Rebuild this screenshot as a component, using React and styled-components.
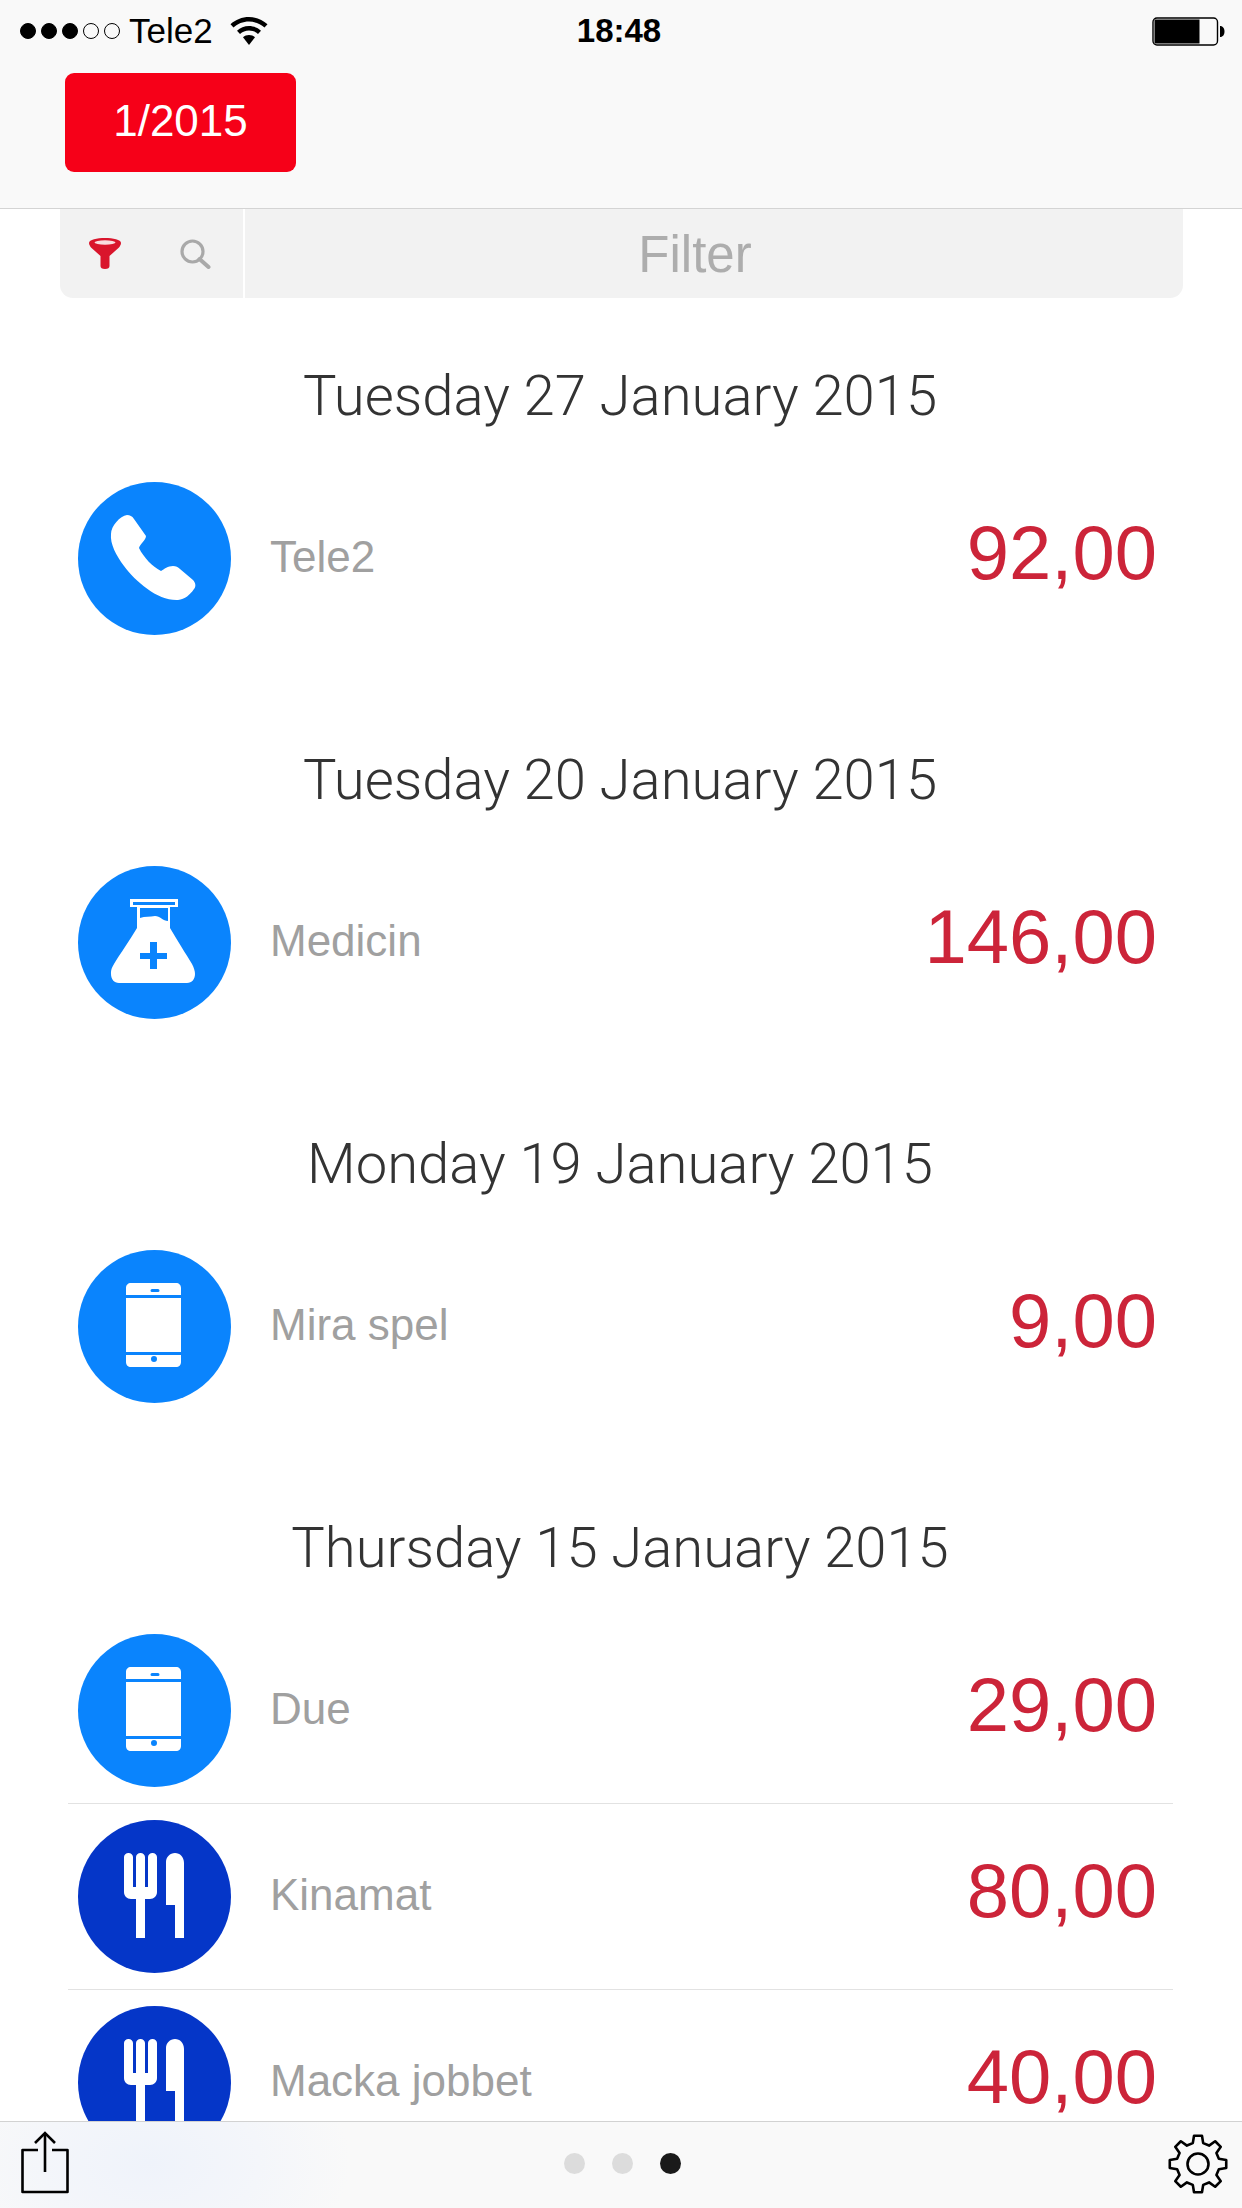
import React from "react";
import styled, { createGlobalStyle } from "styled-components";

const Global = createGlobalStyle`
  html, body { margin: 0; padding: 0; background: #fff; }
  * { box-sizing: border-box; }
`;

const Screen = styled.div`
  width: 1242px;
  height: 2208px;
  display: flex;
  flex-direction: column;
  overflow: hidden;
  background: #fff;
  font-family: "Liberation Sans", Arial, sans-serif;
`;

const Header = styled.header`
  flex: none;
  height: 209px;
  background: #f9f9f9;
  border-bottom: 1px solid #d4d4d4;
`;

const StatusBar = styled.div`
  height: 62px;
  padding: 0 17px 0 20px;
  display: grid;
  grid-template-columns: 1fr auto 1fr;
  align-items: center;
  color: #000;
`;

const StatusLeft = styled.div`
  display: flex;
  align-items: center;
`;

const SignalDots = styled.div`
  display: flex;
  gap: 5px;
  margin-right: 9px;
`;

const SignalDot = styled.span`
  width: 16px;
  height: 16px;
  border-radius: 50%;
  background: ${(p) => (p.$on ? "#000" : "transparent")};
  border: 1px solid #000;
`;

const Carrier = styled.span`
  font-size: 35px;
  line-height: 40px;
  margin-right: 17px;
`;

const Time = styled.span`
  font-size: 33px;
  line-height: 40px;
  font-weight: 700;
  margin-right: 7px;
`;

const StatusRight = styled.div`
  display: flex;
  justify-content: flex-end;
`;

const MonthButton = styled.button`
  display: block;
  width: 231px;
  height: 99px;
  margin: 11px 0 0 65px;
  padding: 0 0 3px;
  border: 0;
  border-radius: 9px;
  background: #f60018;
  color: #fff;
  font-family: inherit;
  font-size: 44px;
  line-height: 96px;
  text-align: center;
`;

const FilterBar = styled.div`
  flex: none;
  height: 89px;
  margin: 0 59px 0 60px;
  display: flex;
  background: #f2f2f2;
  border-radius: 0 0 13px 13px;
`;

const FilterTools = styled.div`
  width: 185px;
  padding-left: 29px;
  display: flex;
  align-items: center;
  gap: 59px;
  border-right: 2px solid #fff;
`;

const FilterField = styled.div`
  flex: 1;
  padding: 2px 38px 0 0;
  text-align: center;
  font-size: 51px;
  line-height: 87px;
  color: #adadad;
`;

const List = styled.main`
  flex: 1;
  min-height: 0;
  overflow: hidden;
  padding-top: 68px;
  display: flex;
  flex-direction: column;
  gap: 98px;
`;

const Group = styled.section`
  display: flex;
  flex-direction: column;
`;

const DateHeading = styled.h2`
  margin: 0 0 40px;
  height: 60px;
  padding-right: 2px;
  font-family: Roboto, "Liberation Sans", sans-serif;
  font-weight: 300;
  font-size: 56.2px;
  line-height: 60px;
  text-align: center;
  color: #333;
`;

const Row = styled.div`
  flex: none;
  height: 186px;
  margin: 0 69px 0 68px;
  padding: 16px 16px 16px 10px;
  display: flex;
  align-items: center;
  border-bottom: 1px solid ${(p) => (p.$last ? "transparent" : "#e2e2e2")};
`;

const Badge = styled.div`
  flex: none;
  width: 153px;
  height: 153px;
  border-radius: 50%;
  background: ${(p) => (p.$dark ? "#0536c8" : "#0a84fd")};
`;

const BadgeIcon = styled.svg`
  display: block;
  width: 153px;
  height: 153px;
  fill: #fff;
`;

const Label = styled.span`
  flex: 1;
  margin: -3px 0 0 39px;
  font-size: 44px;
  color: #a0a0a0;
`;

const Amount = styled.span`
  font-size: 76px;
  line-height: 76px;
  color: #cc2439;
  margin-top: -12px;
`;

const Toolbar = styled.footer`
  flex: none;
  height: 87px;
  padding: 0 14px 3px 20px;
  display: flex;
  align-items: center;
  justify-content: space-between;
  border-top: 1px solid #d2d2d2;
  background: radial-gradient(ellipse 200px 130px at 150px 40px, #eff3fa 0%, #f4f6fa 55%, #f9f9f9 100%);
`;

const Pager = styled.div`
  display: flex;
  gap: 27px;
  margin-left: 6px;
`;

const PagerDot = styled.span`
  width: 21px;
  height: 21px;
  border-radius: 50%;
  background: ${(p) => (p.$active ? "#1a1a1a" : "#dcdcdc")};
`;

const ToolIcon = styled.svg`
  display: block;
  fill: none;
  stroke: #000;
  stroke-width: 2.6;
`;

const ShareGlyph = styled(ToolIcon)`
  margin-top: -2px;
`;

const Wifi = () => (
  <svg width="38" height="28" viewBox="0 0 38 28" fill="#000">
    <path d="M19 0C12 0 5.500 2.700.5 7.200L3.500 10.600C7.600 6.900 13 4.600 19 4.600S30.400 6.900 34.500 10.600L37.500 7.200C32.500 2.700 26 0 19 0Z" />
    <path d="M19 9C14.400 9 10.200 10.800 7 13.700L10 17C12.400 14.900 15.500 13.600 19 13.600S25.600 14.900 28 17L31 13.700C27.800 10.800 23.600 9 19 9Z" />
    <path d="M19 18C16.700 18 14.700 18.800 13 20.200L19 28L25 20.200C23.300 18.800 21.300 18 19 18Z" />
  </svg>
);

const Battery = () => (
  <svg width="73" height="29" viewBox="0 0 73 29">
    <rect x="1" y="1" width="64.500" height="27" rx="4" fill="none" stroke="#000" strokeWidth="1.400" />
    <rect x="2.500" y="2.500" width="45" height="24" fill="#000" />
    <path d="M68 9C71 9 72.500 11.500 72.500 14.500S71 20 68 20Z" fill="#000" />
  </svg>
);

const Funnel = () => (
  <svg width="32" height="31" viewBox="0 0 32 31">
    <path
      d="M0 5C0 1.500 8 0 16 0S32 1.500 32 5C32 6.500 31 8 30 9.500L20.500 18V28C20.500 30 19 31 16 31S11.500 30 11.500 28V18L2 9.500C1 8 0 6.500 0 5Z"
      fill="#d9152c"
    />
    <ellipse cx="16" cy="4.500" rx="10.500" ry="2.200" fill="#f9dde0" />
  </svg>
);

const Search = () => (
  <svg width="31" height="30" viewBox="0 0 31 30" fill="none" stroke="#a9a9a9">
    <circle cx="12.500" cy="12.500" r="10.500" strokeWidth="3.200" />
    <path d="M19.500 20L28.500 28" strokeWidth="4" strokeLinecap="round" />
  </svg>
);

const PhoneIcon = () => (
  <BadgeIcon viewBox="0 0 153 153">
    <path d="M33 52C33 44 42 34 49 33C52 33 54 34 56 37L68 54C68 58 62 62 61 66C66 76 74 84 83 89C86 87 90 84 95 84C98 84 100 85 102 87L115 98C118 101 118 105 116 107C112 113 107 117 100 118C80 119 58 100 46 84C38 73 32 62 33 52Z" />
  </BadgeIcon>
);

const FlaskIcon = () => (
  <BadgeIcon viewBox="0 0 153 153">
    <path
      fillRule="evenodd"
      d="M52 33H100V41H92V62C99 74 108 88 114 98C116 102 117 105 117 108C117 113 114 117 109 117H41C36 117 33 113 33 108C33 105 33 103 36 98C42 88 52 74 59 62V41H52ZM55 36V39H97V36ZM62 42V52C67 50 72 51 77 50C82 50 85 55 90 55V42ZM72 76V87H62V93H72V103H79V93H89V87H79V76Z"
    />
  </BadgeIcon>
);

const DeviceIcon = () => (
  <BadgeIcon viewBox="0 0 153 153">
    <path
      fillRule="evenodd"
      d="M53 33H98C101 33 103 35 103 38V112C103 115 101 117 98 117H53C50 117 48 115 48 112V38C48 35 50 33 53 33ZM74 39A1.500 1.500 0 0 0 74 42H80A1.500 1.500 0 0 0 80 39ZM48 45V48H103V45ZM48 102V105H103V102ZM76 106A3 3 0 1 0 76 112A3 3 0 1 0 76 106Z"
    />
  </BadgeIcon>
);

const CutleryIcon = () => (
  <BadgeIcon viewBox="0 0 153 153">
    <path d="M50.500 33C53 33 55 35 55 37V67H58V37C58 35 60 33 62.500 33S67 35 67 37V67H70V37C70 35 72 33 74.500 33S79 35 79 37V72C79 76 76 79 72 79H67V118H58V79H53C49 79 46 76 46 72V37C46 35 48 33 50.500 33Z" />
    <path d="M97 33C102 33 106 37 106 43V118H97V85H88V42C88 37 92 33 97 33Z" />
  </BadgeIcon>
);

const ShareIcon = () => (
  <ShareGlyph width="50" height="64" viewBox="0 0 50 64">
    <path d="M18 19H2.500V61H47.500V19H32" strokeLinejoin="round" />
    <path d="M25 2V41" />
    <path d="M15 12L25 2L35 12" />
  </ShareGlyph>
);

const gearPath = (() => {
  const cx = 30;
  const cy = 30;
  const pt = (r, deg) => {
    const a = ((deg - 90) * Math.PI) / 180;
    return `${(cx + r * Math.cos(a)).toFixed(2)} ${(cy + r * Math.sin(a)).toFixed(2)}`;
  };
  const parts = [];
  for (let i = 0; i < 8; i += 1) {
    const c = i * 45;
    parts.push(i === 0 ? `M${pt(21.500, c - 14)}` : `L${pt(21.500, c - 14)}`);
    parts.push(`L${pt(28.500, c - 8)}`, `L${pt(28.500, c + 8)}`, `L${pt(21.500, c + 14)}`);
  }
  return `${parts.join(" ")}Z`;
})();

const GearIcon = () => (
  <ToolIcon width="60" height="60" viewBox="0 0 60 60">
    <path d={gearPath} strokeLinejoin="round" />
    <circle cx="30" cy="30" r="10.500" />
  </ToolIcon>
);

const groups = [
  { date: "Tuesday 27 January 2015", rows: [{ label: "Tele2", amount: "92,00", Icon: PhoneIcon }] },
  { date: "Tuesday 20 January 2015", rows: [{ label: "Medicin", amount: "146,00", Icon: FlaskIcon }] },
  { date: "Monday 19 January 2015", rows: [{ label: "Mira spel", amount: "9,00", Icon: DeviceIcon }] },
  {
    date: "Thursday 15 January 2015",
    rows: [
      { label: "Due", amount: "29,00", Icon: DeviceIcon },
      { label: "Kinamat", amount: "80,00", Icon: CutleryIcon, dark: true },
      { label: "Macka jobbet", amount: "40,00", Icon: CutleryIcon, dark: true },
    ],
  },
];

export default function App() {
  return (
    <Screen>
      <Global />
      <Header>
        <StatusBar>
          <StatusLeft>
            <SignalDots>
              {[true, true, true, false, false].map((on, i) => (
                <SignalDot key={i} $on={on} />
              ))}
            </SignalDots>
            <Carrier>Tele2</Carrier>
            <Wifi />
          </StatusLeft>
          <Time>18:48</Time>
          <StatusRight>
            <Battery />
          </StatusRight>
        </StatusBar>
        <MonthButton>1/2015</MonthButton>
      </Header>
      <FilterBar>
        <FilterTools>
          <Funnel />
          <Search />
        </FilterTools>
        <FilterField>Filter</FilterField>
      </FilterBar>
      <List>
        {groups.map((g) => (
          <Group key={g.date}>
            <DateHeading>{g.date}</DateHeading>
            {g.rows.map((r, i) => (
              <Row key={r.label} $last={i === g.rows.length - 1}>
                <Badge $dark={r.dark}>
                  <r.Icon />
                </Badge>
                <Label>{r.label}</Label>
                <Amount>{r.amount}</Amount>
              </Row>
            ))}
          </Group>
        ))}
      </List>
      <Toolbar>
        <ShareIcon />
        <Pager>
          <PagerDot />
          <PagerDot />
          <PagerDot $active />
        </Pager>
        <GearIcon />
      </Toolbar>
    </Screen>
  );
}
